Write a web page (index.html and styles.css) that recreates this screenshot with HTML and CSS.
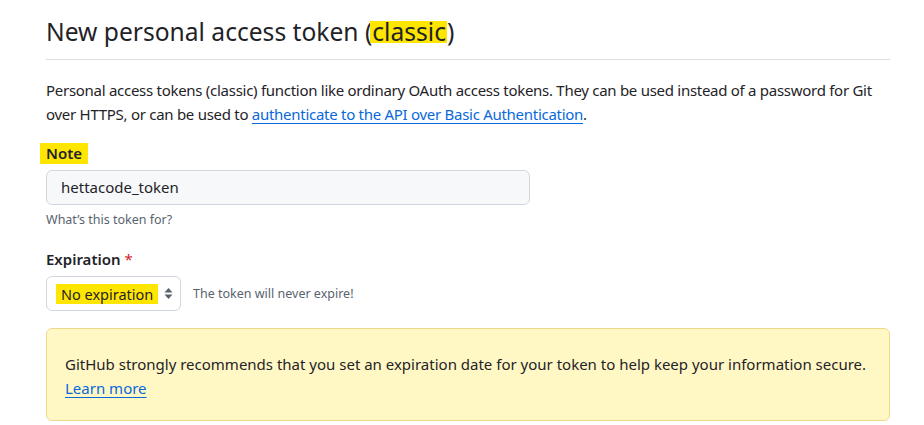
FILE: index.html
```html
<!DOCTYPE html>
<html>
<head>
<meta charset="utf-8">
<link rel="stylesheet" href="styles.css">
</head>
<body>
<div class="page">
  <div class="subhead">
    <h2 class="subhead-heading">New personal access token (<mark class="hl-title">classic</mark>)</h2>
  </div>
  <p class="intro">Personal access tokens (classic) function like ordinary OAuth access tokens. They can be used instead of a password for Git over HTTPS, or can be used to <a href="#" class="link">authenticate to the API over Basic Authentication</a>.</p>

  <div class="form-group">
    <label class="label"><mark class="hl-label">Note</mark></label>
    <div class="input">hettacode_token</div>
    <p class="note">What’s this token for?</p>
  </div>

  <div class="form-group expiration">
    <label class="label">Expiration <span class="req">*</span></label>
    <div class="select-row">
      <div class="select">
        <mark class="hl-select">No expiration</mark>
        <svg class="caret" width="9" height="13" viewBox="0 0 9 13"><path d="M4.5 1 L8.5 5.5 H0.5 Z M4.5 12 L0.5 7.5 H8.5 Z" fill="#59636e"/></svg>
      </div>
      <span class="select-note">The token will never expire!</span>
    </div>
  </div>

  <div class="flash">
    <p class="flash-text">GitHub strongly recommends that you set an expiration date for your token to help keep your information secure.</p>
    <a href="#" class="link">Learn more</a>
  </div>
</div>
</body>
</html>
```
FILE: styles.css
```css
* { box-sizing: border-box; }
body {
  margin: 0;
  background: #ffffff;
  font-family: "Noto Sans", "Open Sans", sans-serif;
  color: #1f2328;
}
.page {
  width: 890px;
  padding-left: 46px;
  padding-top: 15px;
}
.subhead {
  border-bottom: 1px solid #d8dee4;
  padding-bottom: 10px;
}
.subhead-heading {
  margin: 0;
  font-size: 24.6px;
  font-weight: 400;
  line-height: 34px;
  color: #1f2328;
}
mark { color: inherit; background: #ffe600; }
.hl-title {
  display: inline-block;
  line-height: 22px;
  padding: 0 1px 0 2px;
  margin-left: -2px;
}
.intro {
  margin: 18px 0 0;
  font-size: 15px;
  line-height: 24px;
  letter-spacing: -0.28px;
}
.link {
  color: #0969da;
  text-decoration: underline;
  text-underline-offset: 3px;
}
.form-group { margin-top: 16px; }
.label {
  display: block;
  font-size: 15px;
  font-weight: 600;
  line-height: 22px;
}
.hl-label {
  display: inline-block;
  line-height: 21px;
  padding: 0 6px;
  margin-left: -6px;
}
.input {
  margin-top: 6px;
  width: 484px;
  height: 35px;
  border: 1px solid #d0d7de;
  border-radius: 6px;
  background: #f6f8fa;
  padding: 0 14px;
  font-size: 15px;
  line-height: 33px;
}
.note {
  margin: 6px 0 0;
  font-size: 12.5px;
  color: #59636e;
}
.expiration { margin-top: 20px; }
.req { color: #d1242f; font-weight: 400; }
.select-row {
  display: flex;
  align-items: center;
  gap: 12px;
  margin-top: 6px;
}
.select {
  display: flex;
  align-items: center;
  width: 135px;
  height: 35px;
  border: 1px solid #d0d7de;
  border-radius: 6px;
  background: #fff;
  padding-left: 9px;
  font-size: 14.5px;
}
.hl-select {
  display: inline-block;
  line-height: 20px;
  padding: 0 5px;
}
.caret { margin-left: 6px; }
.select-note { font-size: 12.5px; color: #59636e; }
.flash {
  margin-top: 17px;
  border: 1px solid #ecd98a;
  background: #fff8c5;
  border-radius: 6px;
  padding: 23px 18px 20px;
  font-size: 15px;
  line-height: 24px;
}
.flash-text { margin: 0; }
```
